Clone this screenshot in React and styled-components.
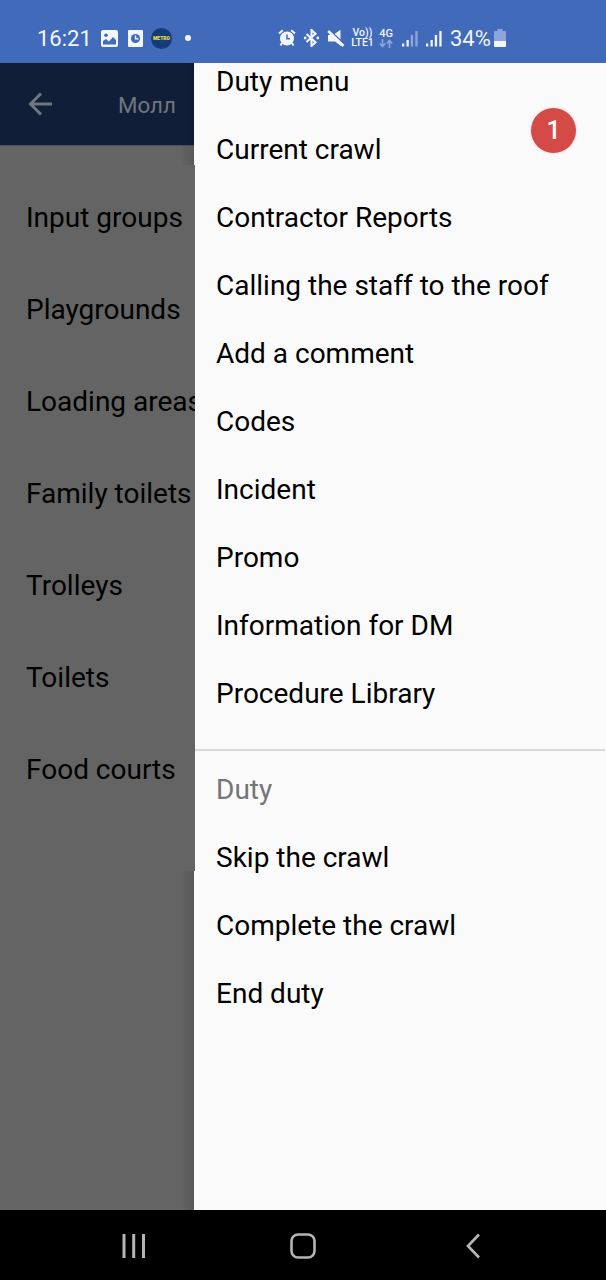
import React from "react";
import styled, { createGlobalStyle } from "styled-components";

const crawlList = [
  "Input groups",
  "Playgrounds",
  "Loading areas",
  "Family toilets",
  "Trolleys",
  "Toilets",
  "Food courts",
];

const menuList = [
  "Duty menu",
  "Current crawl",
  "Contractor Reports",
  "Calling the staff to the roof",
  "Add a comment",
  "Codes",
  "Incident",
  "Promo",
  "Information for DM",
  "Procedure Library",
];

const dutyList = ["Skip the crawl", "Complete the crawl", "End duty"];

function App() {
  return (
    <Screen>
      <GlobalStyle />
      <StatusBar />
      <Main>
        <Page>
          <Toolbar>
            <BackArrow />
            <h1>Молл</h1>
          </Toolbar>
          <List>
            {crawlList.map((item) => (
              <li key={item}>{item}</li>
            ))}
          </List>
          <Shadow $top={0} $height={102} />
          <Shadow $top={808} $height={339} />
        </Page>
        <Drawer>
          <Menu>
            {menuList.map((item) => (
              <MenuItem key={item}>{item}</MenuItem>
            ))}
          </Menu>
          <Divider />
          <Menu>
            <MenuItem $muted>Duty</MenuItem>
            {dutyList.map((item) => (
              <MenuItem key={item}>{item}</MenuItem>
            ))}
          </Menu>
          <Badge>1</Badge>
        </Drawer>
      </Main>
      <NavBar />
    </Screen>
  );
}

export default App;

function StatusBar() {
  return (
    <Status>
      <Clock>16:21</Clock>
      <PictureIcon />
      <ClockFileIcon />
      <Metro>METRO</Metro>
      <Dot />
      <AlarmIcon />
      <BluetoothIcon />
      <MuteIcon />
      <Volte>
        <span>Vo))</span>
        <span>LTE1</span>
      </Volte>
      <Network>
        <span>4G</span>
        <svg width="14" height="9" viewBox="0 0 14 9" fill="none" stroke="#8ca6dc" strokeWidth="1.6">
          <path d="M3.5 0v7M.8 4.5l2.7 3 2.7-3M10.5 9V2M7.8 4.5l2.7-3 2.7 3" />
        </svg>
      </Network>
      <Signal $gap="9px" dim />
      <Signal $gap="8px" />
      <Percent>34%</Percent>
      <Battery />
    </Status>
  );
}

function BackArrow() {
  return (
    <svg width="24" height="24" viewBox="0 0 24 24" fill="none" stroke="#70757f" strokeWidth="3">
      <path d="M24 12H2.500M13 1.500L2.500 12l10.500 10.500" />
    </svg>
  );
}

function PictureIcon() {
  return (
    <Icon $left="11px" width="17" height="17" viewBox="0 0 17 17">
      <rect width="17" height="17" rx="2" fill="#f1f6ff" />
      <circle cx="5" cy="5.3" r="1.8" fill="#416aba" />
      <path d="M2 14.5V11l3-2 3 2.5L12 7l3 3v4.5z" fill="#416aba" />
    </Icon>
  );
}

function ClockFileIcon() {
  return (
    <Icon $left="10px" width="15" height="17" viewBox="0 0 15 17">
      <rect width="15" height="17" rx="1" fill="#f1f6ff" />
      <circle cx="7.5" cy="8.5" r="4.6" fill="#416aba" />
      <path d="M7.5 5.5v3.3h3" fill="none" stroke="#f1f6ff" strokeWidth="1.4" />
    </Icon>
  );
}

function AlarmIcon() {
  return (
    <Icon $left="87px" width="18" height="18" viewBox="0 0 18 18">
      <path
        d="M1 4.5L4.8 1.2M17 4.5L13.2 1.2M4 14l-1.5 2.5M14 14l1.5 2.5"
        stroke="#f1f6ff"
        strokeWidth="2"
      />
      <circle cx="9" cy="9.5" r="7" fill="#f1f6ff" />
      <path d="M9 5.5v4.3h3" fill="none" stroke="#416aba" strokeWidth="1.5" />
    </Icon>
  );
}

function BluetoothIcon() {
  return (
    <Icon $left="7px" width="17" height="18" viewBox="0 0 17 18">
      <path
        d="M3.5 5l9 8.3-4 3.7V1l4 3.7-9 8.3"
        fill="none"
        stroke="#f1f6ff"
        strokeWidth="2.1"
      />
      <circle cx="2.2" cy="9" r="1.4" fill="#f1f6ff" />
      <circle cx="14.8" cy="9" r="1.4" fill="#f1f6ff" />
    </Icon>
  );
}

function MuteIcon() {
  return (
    <Icon $left="7px" width="18" height="18" viewBox="0 0 18 18">
      <path d="M1 6h3.5L14 14.500V17l-6-4.500H1zM7.500 5L13.500 .8v9.700z" fill="#f1f6ff" />
      <path d="M3 1.500L17.500 15.500" stroke="#416aba" strokeWidth="1.3" />
      <path d="M1.200 2L16.500 17" stroke="#f1f6ff" strokeWidth="2.6" />
    </Icon>
  );
}

function Signal({ dim, $gap }) {
  const faded = dim ? "#8ca6dc" : "#f1f6ff";
  return (
    <Icon $left={$gap} width="16" height="17" viewBox="0 0 16 17" fill="#f1f6ff">
      <rect x="0" y="13.5" width="2.3" height="3" />
      <rect x="4.5" y="10" width="2.3" height="6.5" />
      <rect x="8.8" y="5" width="2.3" height="11.5" fill={faded} />
      <rect x="13.3" y="1" width="2.3" height="15.5" fill={faded} />
    </Icon>
  );
}

function Battery() {
  return (
    <Icon $left="3px" width="12" height="18" viewBox="0 0 12 18">
      <path d="M3.5 0h5v2H11q1 0 1 1v9H0V3q0-1 1-1h2.5z" fill="#8ca6dc" />
      <path d="M0 12h12v5q0 1-1 1H1q-1 0-1-1z" fill="#f1f6ff" />
    </Icon>
  );
}

function NavBar() {
  return (
    <Nav>
      <svg width="24" height="26" viewBox="0 0 24 26" stroke="#b5b5b5" strokeWidth="3">
        <path d="M2 1v24M11.7 1v24M21.5 1v24" />
      </svg>
      <svg width="26" height="26" viewBox="0 0 26 26" fill="none" stroke="#b5b5b5" strokeWidth="2.6">
        <rect x="1.5" y="1.5" width="23" height="23" rx="6.5" />
      </svg>
      <svg width="14" height="26" viewBox="0 0 14 26" fill="none" stroke="#b5b5b5" strokeWidth="2.7">
        <path d="M13 1.5L2 13l11 11.5" />
      </svg>
    </Nav>
  );
}

const GlobalStyle = createGlobalStyle`
  * {
    box-sizing: border-box;
  }

  body {
    margin: 0;
    font-family: Roboto, "Liberation Sans", sans-serif;
  }
`;

const Screen = styled.div`
  width: 606px;
  height: 1280px;
  display: flex;
  flex-direction: column;
  overflow: hidden;
  background: #000;
`;

const Status = styled.header`
  height: 63px;
  flex: none;
  display: flex;
  align-items: center;
  padding: 13px 0 0 37px;
  background: #416aba;
  color: #f1f6ff;
`;

const Icon = styled.svg`
  flex: none;
  margin-left: ${(props) => props.$left};
`;

const Clock = styled.span`
  width: 53px;
  font-size: 22px;
`;

const Metro = styled.span`
  width: 21px;
  height: 21px;
  margin-left: 8px;
  display: flex;
  align-items: center;
  justify-content: center;
  border-radius: 50%;
  background: #173a78;
  color: #e9e63c;
  font-size: 5px;
  font-weight: 900;
`;

const Dot = styled.span`
  width: 6px;
  height: 6px;
  margin-left: 13px;
  border-radius: 50%;
  background: #f1f6ff;
`;

const Volte = styled.span`
  width: 23px;
  margin-left: 6px;
  display: flex;
  flex-direction: column;
  align-items: center;
  font-size: 10.5px;
  font-weight: 500;
  line-height: 10px;
`;

const Network = styled.span`
  width: 14px;
  margin-left: 5px;
  display: flex;
  flex-direction: column;
  align-items: center;
  font-size: 11px;
  font-weight: 500;
  line-height: 10px;
`;

const Percent = styled.span`
  width: 41px;
  margin-left: 8px;
  font-size: 22px;
`;

const Main = styled.main`
  height: 1147px;
  flex: none;
  display: flex;
`;

const Page = styled.section`
  position: relative;
  width: 195px;
  flex: none;
  overflow: hidden;
  background: #646464;
`;

const Toolbar = styled.div`
  height: 83px;
  display: flex;
  align-items: center;
  padding: 0 0 1px 28px;
  border-bottom: 1px solid #4c4f56;
  background: #101e37;

  h1 {
    margin: 2px 0 0 66px;
    color: #70757f;
    font-size: 22.3px;
    font-weight: 400;
  }
`;

const List = styled.ul`
  margin: 0;
  padding: 25px 0 0 26px;
  list-style: none;
  color: #000;

  li {
    height: 92px;
    display: flex;
    align-items: center;
    font-size: 28px;
    white-space: nowrap;
  }
`;

/* the last pixel is the drawer's own edge */
const Shadow = styled.div`
  position: absolute;
  top: ${(props) => props.$top}px;
  right: 0;
  width: 15px;
  height: ${(props) => props.$height}px;
  border-right: 1px solid #fafafa;
  background: linear-gradient(to right, rgba(0, 0, 0, 0), rgba(0, 0, 0, 0.1));
`;

const Drawer = styled.aside`
  position: relative;
  flex: 1;
  overflow: hidden;
  background: #fafafa;
`;

const Menu = styled.nav`
  display: flex;
  flex-direction: column;
  padding-left: 21px;

  &:first-of-type {
    margin-top: -16px;
  }
`;

const MenuItem = styled.a`
  height: 68px;
  display: flex;
  align-items: center;
  color: ${(props) => (props.$muted ? "#757575" : "#000")};
  font-size: 28px;
  white-space: nowrap;
`;

const Divider = styled.hr`
  height: 2px;
  margin: 22px 1px 4px 0;
  border: 0;
  background: #d9dada;
`;

const Badge = styled.span`
  position: absolute;
  top: 45px;
  right: 30px;
  width: 45px;
  height: 45px;
  display: flex;
  align-items: center;
  justify-content: center;
  border-radius: 50%;
  background: #d34a46;
  box-shadow: 0 0 3px rgba(211, 74, 70, 0.25);
  color: #fff;
  font-size: 25px;
  font-weight: 500;
`;

const Nav = styled.footer`
  height: 70px;
  display: grid;
  grid-template-columns: 24px 26px 14px;
  column-gap: 144px;
  align-items: center;
  padding: 2px 0 0 122px;
  background: #000;

  svg:last-child {
    margin-left: 6px;
  }
`;
